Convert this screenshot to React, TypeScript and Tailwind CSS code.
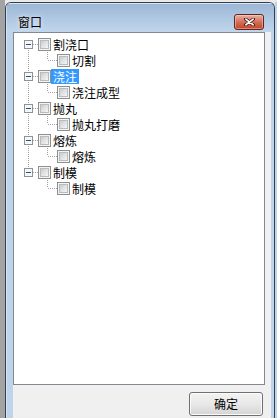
import React from 'react'

type Group = { label: string; children: string[]; selected?: boolean }

const groups: Group[] = [
  { label: '割浇口', children: ['切割'] },
  { label: '浇注', children: ['浇注成型'], selected: true },
  { label: '抛丸', children: ['抛丸打磨'] },
  { label: '熔炼', children: ['熔炼'] },
  { label: '制模', children: ['制模'] },
]

const dot = { stroke: '#a0a0a0', strokeWidth: 1, strokeDasharray: '1 1' }

function CheckBox() {
  return (
    <div className="w-[13px] h-[13px] shrink-0 border border-[#8e8f8f] bg-[#f4f4f4] p-[1px]">
      <div className="w-full h-full border border-[#b8bcc0] bg-linear-to-br from-[#cbcdcf] to-[#f6f6f6]" />
    </div>
  )
}

function Label({ text, selected }: { text: string; selected?: boolean }) {
  return (
    <span
      className={
        'px-[2px] h-[15px] leading-[15px] text-[12px] whitespace-nowrap ' +
        (selected ? 'bg-[#3399ff] text-white' : 'text-black')
      }
    >
      {text}
    </span>
  )
}

function RootRow({ g, first, last }: { g: Group; first: boolean; last: boolean }) {
  return (
    <div className="flex items-center h-[16px]">
      <svg width="24" height="16" className="shrink-0">
        <line x1="14.5" y1={first ? 8 : 0} x2="14.5" y2={last ? 8 : 16} {...dot} />
        <line x1="19" y1="8.5" x2="24" y2="8.5" {...dot} />
        <rect x="10.5" y="4.5" width="8" height="8" fill="#f7f7f7" stroke="#919191" />
        <line x1="12" y1="8.5" x2="17" y2="8.5" stroke="#2b4a92" strokeWidth="1" />
      </svg>
      <CheckBox />
      <Label text={g.label} selected={g.selected} />
    </div>
  )
}

function ChildRow({ text, last }: { text: string; last: boolean }) {
  return (
    <div className="flex items-center h-[16px]">
      <svg width="43" height="16" className="shrink-0">
        {!last && <line x1="14.5" y1="0" x2="14.5" y2="16" {...dot} />}
        <line x1="33.5" y1="0" x2="33.5" y2="8" {...dot} />
        <line x1="34" y1="8.5" x2="43" y2="8.5" {...dot} />
      </svg>
      <CheckBox />
      <Label text={text} />
    </div>
  )
}

export default function App() {
  return (
    <div className="w-[277px] h-[418px] flex overflow-hidden bg-[#a3a3a3] font-['Noto_Sans_CJK_SC','Noto_Sans',sans-serif]">
      <div className="w-[5px] shrink-0" />
      <div className="flex-1 flex flex-col">
        <div className="h-[2px] bg-[#e9e9e9]" />
        <div className="flex-1 flex bg-[#e9e9e9]">
          {/* window */}
          <div className="w-[270px] flex flex-col border border-b-0 border-[#36404d] rounded-t-[6px] overflow-hidden bg-[#bed4eb]">
            {/* title bar */}
            <div className="h-[29px] shrink-0 flex items-center justify-between pt-[7px] pl-[11px] pr-[10px] bg-linear-to-b from-[#9db7d6] to-[#c1d6ec] border-t border-l border-[#e4eef8]/60">
              <span className="text-[12px] leading-[14px] text-black [text-shadow:0_0_5px_#ffffff]">窗口</span>
              <div className="w-[30px] h-[16px] rounded-[3px] border border-[#5e2521] bg-linear-to-b from-[#e8b3a6] via-[#d46d57] to-[#c2442b] flex items-center justify-center shadow-[inset_0_0_0_1px_rgba(255,220,210,0.45)]">
                <svg width="11" height="8" viewBox="0 0 11 8">
                  <path d="M1.5 1 L9.5 7 M9.5 1 L1.5 7" stroke="#4a1f1c" strokeWidth="3.2" strokeLinecap="round" />
                  <path d="M1.8 1.2 L9.2 6.8 M9.2 1.2 L1.8 6.8" stroke="#ffffff" strokeWidth="1.6" strokeLinecap="round" />
                </svg>
              </div>
            </div>
            {/* body */}
            <div className="flex-1 flex">
              <div className="w-[7px] shrink-0 border-l border-[#e4eef8]/60" />
              <div className="w-[258px] shrink-0 bg-[#f0f0f0] flex flex-col">
                <div className="w-[252px] h-[353px] border border-[#828790] bg-white pt-[3px]">
                  {groups.map((g, i) => (
                    <div key={g.label}>
                      <RootRow g={g} first={i === 0} last={i === groups.length - 1} />
                      {g.children.map(c => (
                        <ChildRow key={c} text={c} last={i === groups.length - 1} />
                      ))}
                    </div>
                  ))}
                </div>
                <div className="pl-[176px] pt-[5px]">
                  <button
                    type="button"
                    className="w-[74px] h-[24px] rounded-[3px] border border-[#707070] bg-linear-to-b from-[#f3f3f3] via-[#e8e8e8] to-[#d4d4d4] text-[12px] text-black shadow-[inset_0_0_0_1px_#fbfbfb]"
                  >
                    确定
                  </button>
                </div>
              </div>
              <div className="flex-1" />
            </div>
          </div>
          <div className="flex-1 bg-[#bed4eb]" />
        </div>
      </div>
    </div>
  )
}
